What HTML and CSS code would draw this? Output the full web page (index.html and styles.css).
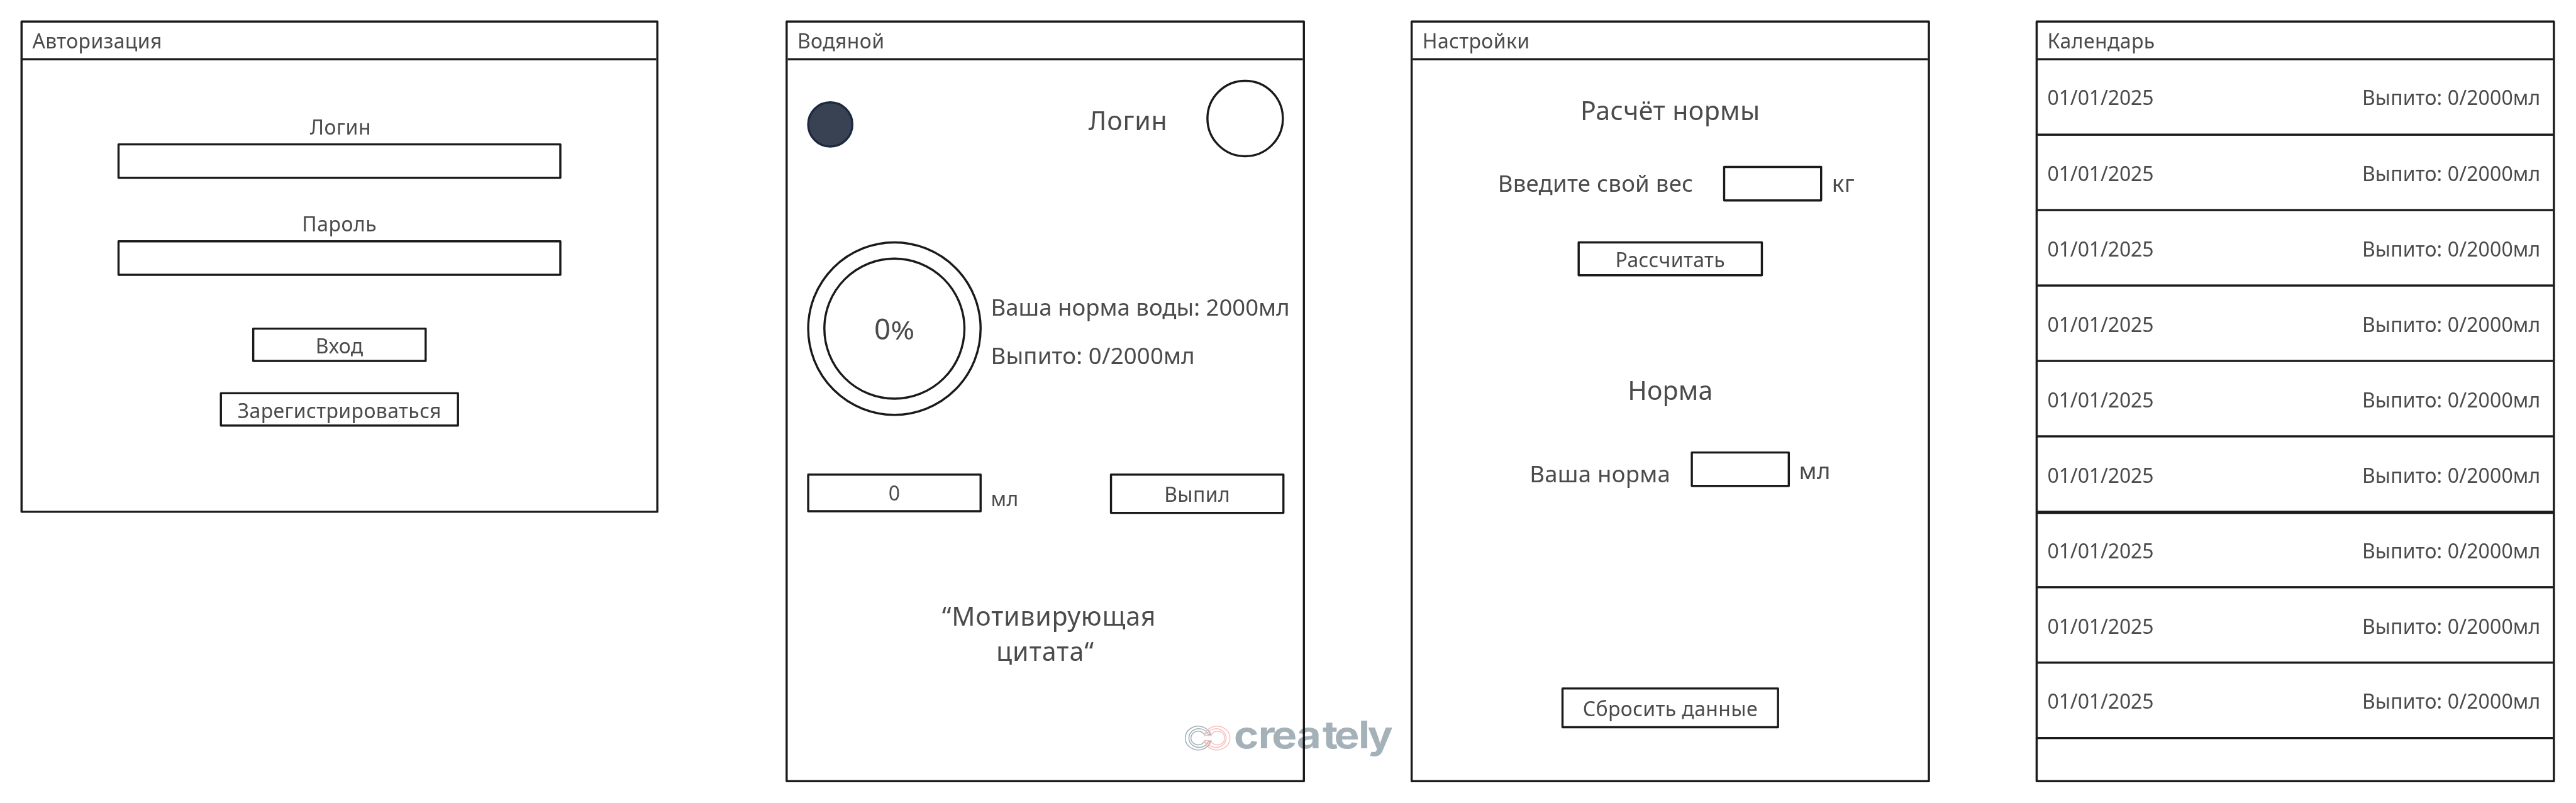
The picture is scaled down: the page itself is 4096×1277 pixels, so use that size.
FILE: index.html
```html
<!DOCTYPE html>
<html lang="ru">
<head>
<meta charset="utf-8">
<title>Водяной</title>
<link rel="stylesheet" href="styles.css">
</head>
<body>
<main class="board">
  <section class="card login">
    <h2 class="head">Авторизация</h2>
    <p class="label">Логин</p>
    <div class="box field"></div>
    <p class="label second">Пароль</p>
    <div class="box field"></div>
    <div class="box enter">Вход</div>
    <div class="box register">Зарегистрироваться</div>
  </section>

  <section class="card tracker">
    <h2 class="head">Водяной</h2>
    <div class="user">
      <span class="dot"></span>
      <span class="name">Логин</span>
      <span class="avatar"></span>
    </div>
    <div class="progress">
      <div class="ring"><div class="ring-inner"><span>0<span class="pct">%</span></span></div></div>
      <div class="stats"><p>Ваша норма воды: 2000мл</p><p class="drunk">Выпито: 0/2000мл</p></div>
    </div>
    <div class="intake">
      <div class="box amount">0</div>
      <span class="unit">мл</span>
      <div class="box drink">Выпил</div>
    </div>
    <p class="quote"><span class="first">“Мотивирующая</span><span>цитата“</span></p>
  </section>

  <section class="card settings">
    <h2 class="head">Настройки</h2>
    <h3 class="title">Расчёт нормы</h3>
    <div class="row weight"><span class="text">Введите свой вес</span><div class="box small"></div><span class="unit">кг</span></div>
    <div class="box calc">Рассчитать</div>
    <h3 class="title norm">Норма</h3>
    <div class="row volume"><span class="text">Ваша норма</span><div class="box small"></div><span class="unit">мл</span></div>
    <div class="box reset">Сбросить данные</div>
  </section>

  <section class="card calendar">
    <h2 class="head">Календарь</h2>
    <div class="day"><span class="date">01/01/2025</span><span>Выпито: 0/2000мл</span></div>
    <div class="day"><span class="date">01/01/2025</span><span>Выпито: 0/2000мл</span></div>
    <div class="day"><span class="date">01/01/2025</span><span>Выпито: 0/2000мл</span></div>
    <div class="day"><span class="date">01/01/2025</span><span>Выпито: 0/2000мл</span></div>
    <div class="day"><span class="date">01/01/2025</span><span>Выпито: 0/2000мл</span></div>
    <div class="day thick"><span class="date">01/01/2025</span><span>Выпито: 0/2000мл</span></div>
    <div class="day after"><span class="date">01/01/2025</span><span>Выпито: 0/2000мл</span></div>
    <div class="day"><span class="date">01/01/2025</span><span>Выпито: 0/2000мл</span></div>
    <div class="day"><span class="date">01/01/2025</span><span>Выпито: 0/2000мл</span></div>
  </section>

  <svg class="mark" viewBox="0 0 400 80" width="400" height="80">
    <g transform="translate(0 5) scale(.33333)" fill="none" stroke-width="5.5">
      <g stroke="#a5b1b9">
        <path d="M171 88A72 66 0 1 0 171 122M156 82A56 52 0 1 0 156 128M137 88A40 38 0 1 0 137 122M150 80L172 90L164 68M150 130L172 120L164 142"/>
      </g>
      <g stroke="#fbc0c0">
        <path d="M136 91A72 66 0 1 1 136 119M151 82A56 52 0 1 1 151 128M172 91A40 38 0 1 1 172 119M174 91H136L147 76M174 119H136L147 134"/>
      </g>
    </g>
    <text class="mark-text" transform="translate(100 59) scale(1.12 1)" y="0" x="0 40.5 63 104 147 166.4 206.5 221.5">creately</text>
  </svg>
</main>
</body>
</html>
```
FILE: styles.css
```css
* { box-sizing: border-box; margin: 0; padding: 0; }
html, body { width: 4096px; height: 1277px; overflow: hidden; background: #fff; }
.board {
  position: relative;
  display: flex;
  align-items: flex-start;
  width: 4780px;
  height: 1490px;
  padding: 38px 0 0 38px;
  transform: scale(0.85672);
  transform-origin: 0 0;
  font-family: "Noto Sans", "Open Sans", sans-serif;
  font-size: 37.33px;
  line-height: 50px;
  letter-spacing: 0.45px;
  color: #4b4b4b;
  white-space: nowrap;
}
.card {
  display: flex;
  flex-direction: column;
  align-items: center;
  flex: none;
  width: 964px;
  height: 1414px;
  border: 4px solid #1a1a1a;
  border-radius: 2px;
}
.head {
  width: 100%;
  height: 70px;
  padding: 9px 18px 0;
  border-bottom: 4px solid #1a1a1a;
  font-size: inherit;
  font-weight: 400;
}
.box {
  display: flex;
  justify-content: center;
  align-items: center;
  flex: none;
  border: 4px solid #1a1a1a;
  border-radius: 2px;
}
.login { width: 1184px; height: 914px; }
.label { margin-top: 99px; padding-left: 4px; letter-spacing: 0.6px; }
.label.second { margin-top: 59px; padding: 0; }
.field { width: 824px; height: 66px; margin-top: 5px; }
.enter { width: 324px; height: 64px; margin-top: 96px; padding-top: 3px; }
.register { width: 444px; height: 64px; margin-top: 56px; padding-top: 3px; }

.tracker { margin-left: 236px; }
.user { display: flex; align-items: flex-start; width: 100%; height: 144px; margin-top: 36px; padding: 0 35px 0 36px; }
.dot { width: 86px; height: 86px; margin-top: 40px; border: 4px solid #1f2a40; border-radius: 50%; background: #384252; }
.name { margin: 44px 72px 0 auto; font-size: 48px; line-height: 64px; letter-spacing: 0.9px; }
.avatar { width: 144px; height: 144px; border: 4px solid #1a1a1a; border-radius: 50%; }
.progress { display: flex; width: 100%; margin-top: 156px; padding-left: 36px; }
.ring, .ring-inner { display: flex; justify-content: center; align-items: center; flex: none; border: 4px solid #1a1a1a; border-radius: 50%; }
.ring { width: 324px; height: 324px; }
.ring-inner { width: 264px; height: 264px; font-size: 53.33px; letter-spacing: 0; }
.pct { display: inline-block; line-height: 1.362; transform: scaleY(0.87); transform-origin: 50% 78.5%; }
.stats { margin: 77px 0 0 17px; font-size: 42.67px; line-height: 90px; letter-spacing: 0; }
.drunk { letter-spacing: 0.2px; }
.intake { display: flex; align-items: flex-start; width: 100%; height: 75px; margin-top: 107px; padding: 0 34px 0 36px; }
.amount { width: 324px; height: 72px; }
.intake .unit { margin: 22px 0 0 17px; }
.drink { width: 324px; height: 75px; margin-left: auto; }
.quote { display: flex; flex-direction: column; align-items: center; margin-top: 156px; font-size: 48px; line-height: 66px; }
.quote span { letter-spacing: 1.2px; }
.quote .first { padding-left: 14px; letter-spacing: 0.9px; }

.settings, .calendar { margin-left: 196px; }
.title { margin-top: 60px; font-size: 48px; font-weight: 400; line-height: 66px; letter-spacing: 0.5px; }
.row { display: flex; align-items: flex-start; width: 100%; height: 66px; font-size: 42.67px; line-height: 60px; }
.small { width: 184px; height: 66px; }
.weight { margin-top: 70px; padding-left: 158px; }
.weight .text { width: 418px; margin-top: 2px; letter-spacing: 0.3px; }
.weight .unit { margin: 2px 0 0 18px; }
.calc { width: 344px; height: 65px; margin-top: 74px; padding-top: 2px; }
.norm { margin-top: 178px; letter-spacing: 0.2px; }
.volume { margin-top: 81px; padding-left: 217px; }
.volume .text { width: 299px; margin-top: 11px; letter-spacing: 0.3px; }
.volume .unit { margin: 6px 0 0 17px; }
.reset { width: 404px; height: 76px; margin-top: 372px; padding-top: 3px; }

.day {
  display: flex;
  justify-content: space-between;
  align-items: center;
  width: 100%;
  height: 140px;
  padding: 4px 23px 0 18px;
  border-bottom: 4px solid #1a1a1a;
  letter-spacing: 0.15px;
}
.date { letter-spacing: -0.15px; }
.head + .day { padding-top: 1px; }
.thick { height: 142px; border-bottom-width: 6px; }
.after { height: 138px; }

/* watermark lying across the board */
.mark { position: absolute; left: 2190px; top: 1330px; mix-blend-mode: multiply; letter-spacing: 0; }
.mark-text { font: 700 70px Inter, sans-serif; fill: #a5b1b9; }
```
